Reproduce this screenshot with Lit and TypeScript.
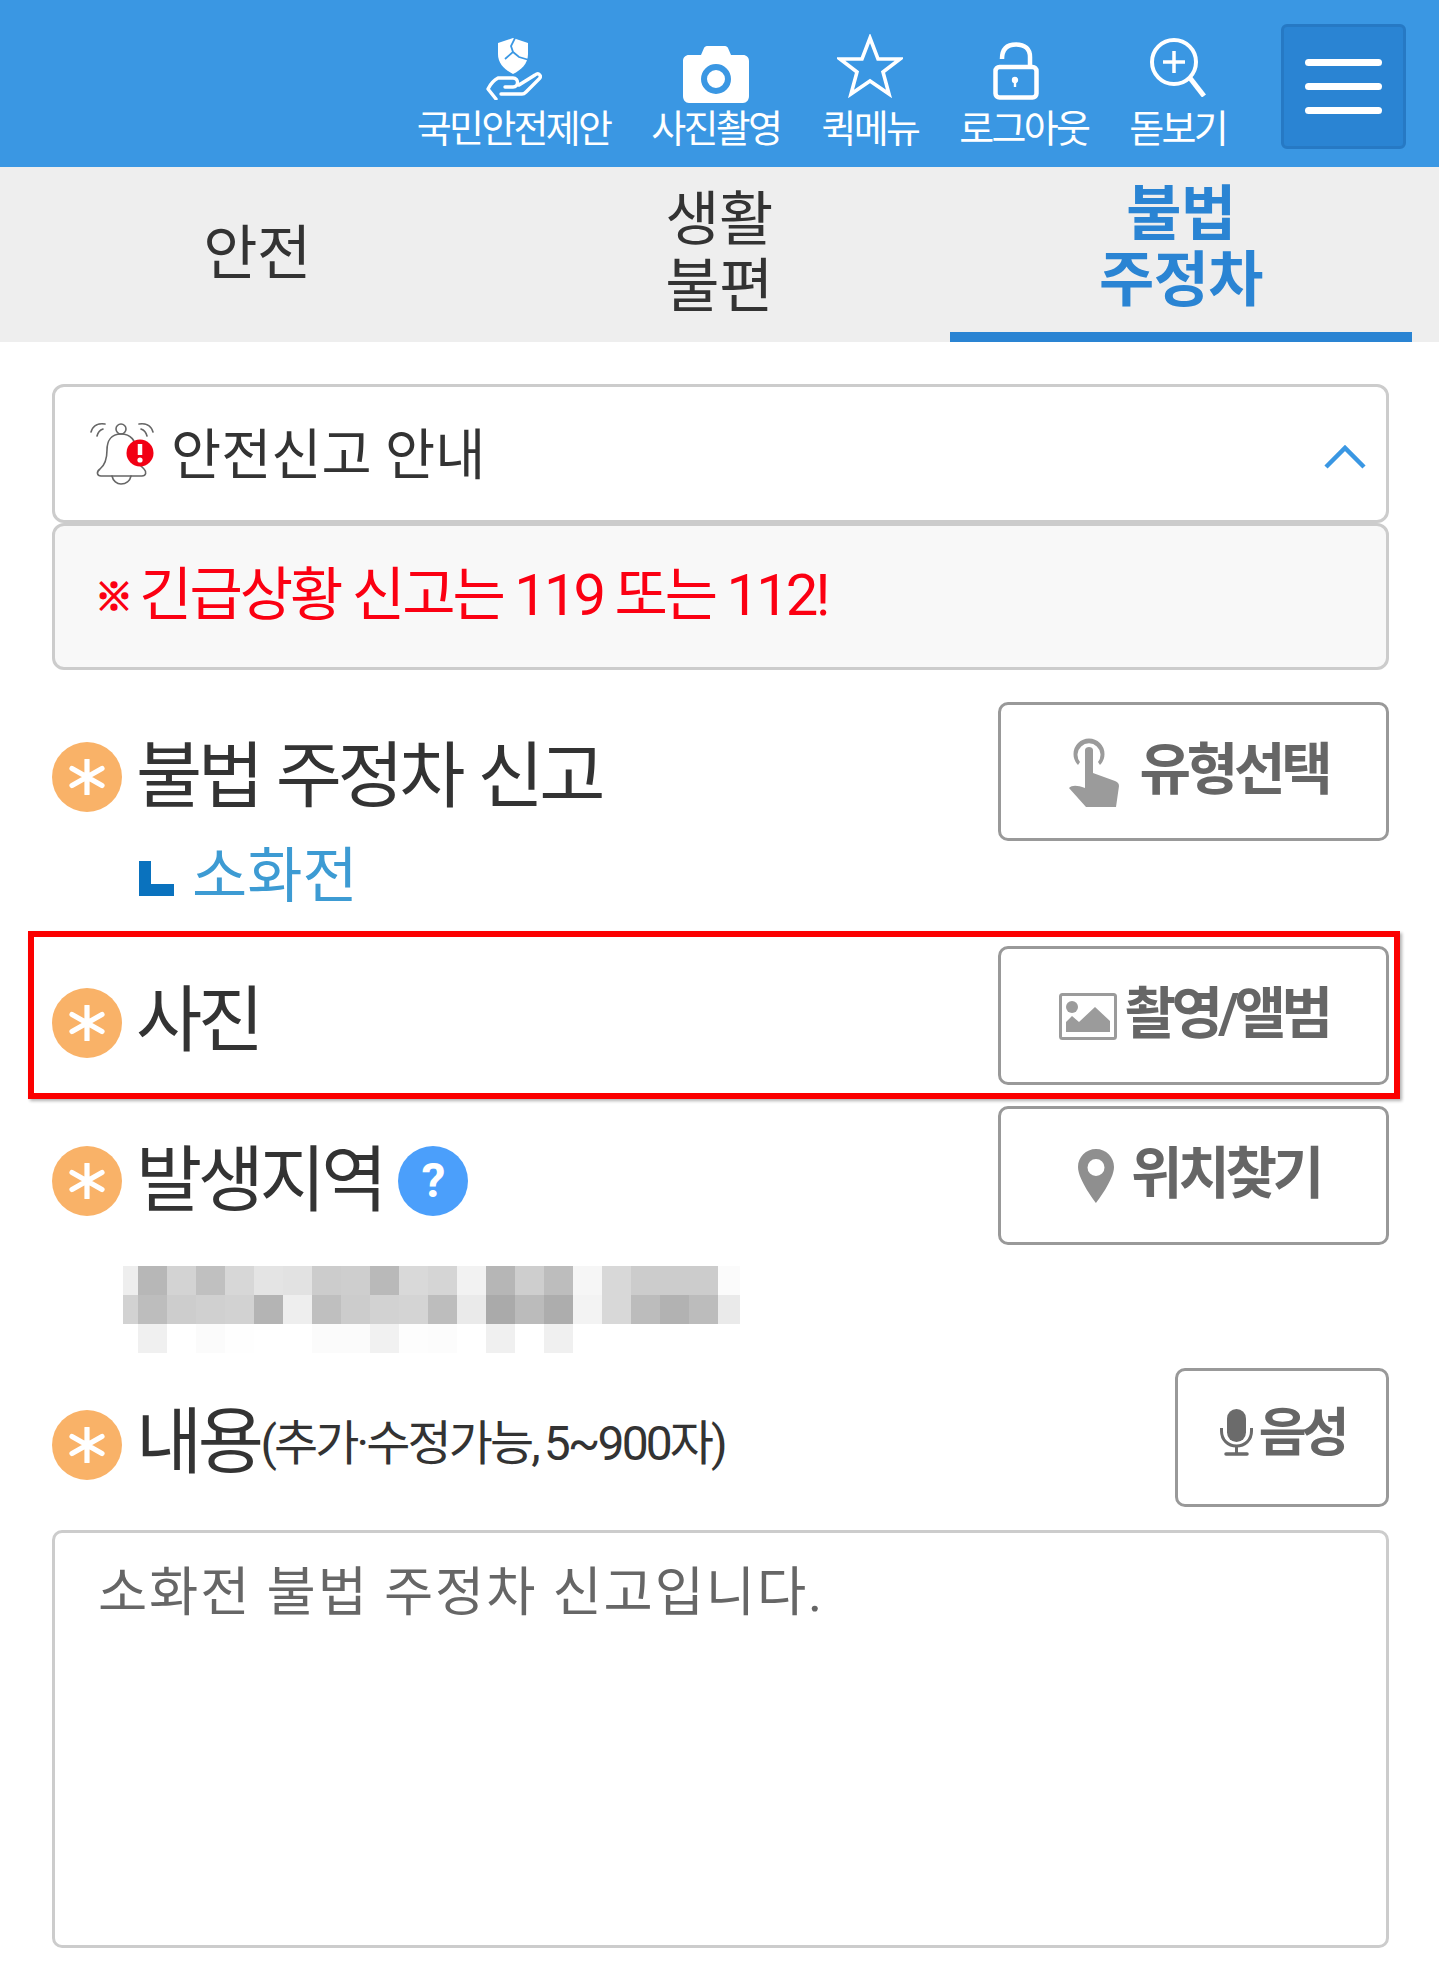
import { LitElement, css, html, svg } from 'lit'
import { customElement } from 'lit/decorators.js'

// gray levels of the blurred address, one row per line
const BLUR_ROWS = [
  ['ee', 'b7', 'd3', 'c0', 'd7', 'e4', 'e2', 'cc', 'ce', 'b9', 'd9', 'd5', 'f2', 'b6', 'ce', 'bd', 'f6', 'd8', 'cc', 'cc', 'cc', 'fb'],
  ['d2', 'bd', 'cd', 'd0', 'd2', 'b4', 'ee', 'bf', 'cc', 'd2', 'd4', 'bd', 'ea', 'aa', 'bb', 'ad', 'f3', 'd8', 'bc', 'b2', 'bc', 'ea'],
  ['ff', 'f0', 'ff', 'fb', 'fe', 'ff', 'ff', 'fb', 'fb', 'f1', 'fd', 'fc', 'ff', 'f0', 'ff', 'f0', 'ff', 'ff', 'ff', 'ff', 'ff', 'ff'],
]

const icons = {
  suggest: svg`<svg width="56" height="62" viewBox="0 0 56 62" fill="none">
    <path d="M12 5 L27 0 L42 5 V16 C42 26 35 32 27 36 C19 32 12 26 12 16 Z" fill="#fff"/>
    <path d="M29 0 L25 8 L27 14 L19 21 M27 14 L33 19 L43 22" stroke="#3a97e3" stroke-width="1.800"/>
    <path d="M10 61 L2 51 C5 45 8 42 12 40 H27 C33 40 33 49 27 49 H19 M33 47 L49 37 C53 34 56 38 53 41 L40 54 C39 55 38 56 36 56 H15" stroke="#fff" stroke-width="3.400" stroke-linejoin="round" stroke-linecap="round"/>
  </svg>`,
  camera: svg`<svg width="66" height="57" viewBox="0 0 66 57">
    <path d="M6 9 H18 L21 2 C21.500 1 22.500 0 24 0 H42 C43.500 0 44.500 1 45 2 L48 9 H60 C63.500 9 66 11.500 66 15 V50 C66 54 63.500 57 60 57 H6 C2.500 57 0 54 0 50 V15 C0 11.500 2.500 9 6 9 Z" fill="#fff"/>
    <circle cx="33" cy="33" r="12" fill="none" stroke="#3a97e3" stroke-width="6"/>
  </svg>`,
  star: svg`<svg width="66" height="64" viewBox="0 0 66 64">
    <path d="M33 4 L41 25 L63 25 L46 38 L52 60 L33 47 L14 60 L20 38 L3 25 L25 25 Z" fill="none" stroke="#fff" stroke-width="3.600" stroke-linejoin="miter"/>
  </svg>`,
  lock: svg`<svg width="46" height="58" viewBox="0 0 46 58" fill="none">
    <path d="M9 17 C9 7 14 2.500 23 2.500 C32 2.500 37 7 37 15 V24" stroke="#fff" stroke-width="4.500"/>
    <rect x="2.500" y="25" width="41" height="30.500" rx="4" stroke="#fff" stroke-width="4.500"/>
    <circle cx="22" cy="38" r="3.200" fill="#fff"/>
    <rect x="20.800" y="38" width="2.400" height="7" fill="#fff"/>
  </svg>`,
  zoom: svg`<svg width="58" height="60" viewBox="0 0 58 60" fill="none">
    <circle cx="25" cy="25" r="22" stroke="#fff" stroke-width="4"/>
    <path d="M25 14 V36 M14 25 H36" stroke="#fff" stroke-width="3.500"/>
    <path d="M41 41 L55 59" stroke="#fff" stroke-width="5"/>
  </svg>`,
  bell: svg`<svg width="64" height="64" viewBox="0 0 64 64" fill="none">
    <g stroke="#666" stroke-width="1.600" stroke-linecap="round">
      <path d="M1 10 C3 3 9 1 15 2 M7 14 C8 10 10 8 13 7 M63 10 C61 3 55 1 49 2 M57 14 C56 10 54 8 51 7"/>
      <circle cx="31" cy="7" r="5"/>
      <path d="M31 12 C21 12 17 19 17 28 C17 38 15 43 10 47 C6 50 7 54 11 54 H52 C56 54 57 50 54 47 C49 43 46 38 46 28 C46 19 41 12 31 12 Z"/>
      <path d="M22 54 C23 59 27 62 31 62 C36 62 40 59 41 54"/>
    </g>
    <circle cx="50" cy="31" r="13.500" fill="#f20014"/>
    <path d="M50 22 V33" stroke="#fff" stroke-width="4.500"/>
    <circle cx="50" cy="38" r="2.600" fill="#fff"/>
  </svg>`,
  chevron: svg`<svg width="42" height="26" viewBox="0 0 42 26" fill="none">
    <path d="M2 23 L21 4 L40 23" stroke="#3a97e3" stroke-width="4.500"/>
  </svg>`,
  touch: svg`<svg width="50" height="69" viewBox="0 0 50 69">
    <path d="M9 27 A15.500 15.500 0 1 1 31 27 L29 24 A11.500 11.500 0 1 0 11 24 Z" fill="#9b9b9b"/>
    <path d="M16 12 C16 8 24 8 24 12 V35 L46 43 C48 44 50 45 50 48 L47 69 H17 L0 50 C3 47 8 47 16 50 Z" fill="#9b9b9b"/>
  </svg>`,
  image: svg`<svg width="58" height="47" viewBox="0 0 58 47">
    <rect x="1.500" y="1.500" width="55" height="44" rx="2" fill="none" stroke="#9b9b9b" stroke-width="3"/>
    <circle cx="13" cy="14" r="6" fill="#9b9b9b"/>
    <path d="M7 39 V29 L13 23 L20 29 L36 14 L51 28 V39 Z" fill="#9b9b9b"/>
  </svg>`,
  pin: svg`<svg width="36" height="54" viewBox="0 0 36 54">
    <path fill-rule="evenodd" d="M18 0 C8 0 0 8 0 18 C0 31 18 54 18 54 C18 54 36 31 36 18 C36 8 28 0 18 0 Z M18 10 A8.500 8.500 0 1 1 18 27 A8.500 8.500 0 1 1 18 10 Z" fill="#8f8f8f"/>
  </svg>`,
  mic: svg`<svg width="33" height="47" viewBox="0 0 33 47" fill="none">
    <rect x="7" y="0" width="19" height="33" rx="9.500" fill="#6b6b6b"/>
    <path d="M1.500 19 V22 C1.500 31 8 37 16.500 37 C25 37 31.500 31 31.500 22 V19" stroke="#6b6b6b" stroke-width="3"/>
    <path d="M16.500 37 V45" stroke="#6b6b6b" stroke-width="3"/>
    <path d="M6 45 H27" stroke="#6b6b6b" stroke-width="3.500" stroke-linecap="round"/>
  </svg>`,
  asterisk: svg`<svg width="36" height="36" viewBox="0 0 36 36">
    <path d="M18 1 V35 M3 9.500 L33 26.500 M33 9.500 L3 26.500" stroke="#fff" stroke-width="5.200" stroke-linecap="round"/>
  </svg>`,
}

@customElement('app-root')
export class AppRoot extends LitElement {
  static styles = css`
    :host {
      display: block;
      height: 1964px;
      overflow: hidden;
      background: #fff;
      font-family: Roboto, 'Noto Sans CJK KR', sans-serif;
      color: #333;
    }
    .top {
      height: 167px;
      box-sizing: border-box;
      background: #3a97e3;
      display: flex;
      justify-content: flex-end;
      align-items: flex-start;
      padding: 24px 33px 0 0;
    }
    .menu {
      display: flex;
      gap: 41px;
      margin-right: 55px;
    }
    .menu-item {
      display: flex;
      flex-direction: column;
      align-items: center;
      height: 125px;
      color: #fff;
      font-size: 38px;
      letter-spacing: -2.700px;
      line-height: 40px;
      white-space: nowrap;
    }
    .menu-icon {
      height: 79px;
      display: flex;
      align-items: flex-end;
      margin-bottom: 6px;
    }
    .menu-item:nth-child(1) svg,
    .menu-item:nth-child(4) svg {
      margin-bottom: 3px;
    }
    .menu-item:nth-child(3) svg {
      margin-bottom: 5px;
    }
    .menu-item:nth-child(4) svg {
      margin-right: 16px;
    }
    .menu-item:nth-child(5) svg {
      margin-bottom: 6px;
    }
    .burger {
      width: 125px;
      height: 125px;
      box-sizing: border-box;
      background: #2a84d3;
      border: 3px solid #2679c4;
      border-radius: 6px;
      display: flex;
      flex-direction: column;
      justify-content: center;
      align-items: center;
      gap: 17px;
    }
    .burger span {
      width: 77px;
      height: 7px;
      background: #fff;
      border-radius: 4px;
    }
    .tabs {
      height: 175px;
      background: #eeeeee;
      display: grid;
      grid-template-columns: repeat(3, 462px);
      padding-left: 26px;
    }
    .tab {
      display: flex;
      align-items: center;
      justify-content: center;
      text-align: center;
      font-size: 59px;
      line-height: 67px;
      letter-spacing: -0.500px;
      padding-bottom: 3px;
    }
    .tab.active {
      color: #2a84d3;
      font-weight: 700;
      font-size: 60px;
      line-height: 66px;
      box-sizing: border-box;
      border-bottom: 10px solid #2a84d3;
      padding: 0 0 3px;
    }
    .content {
      padding: 42px 50px 0 52px;
    }
    .notice-head {
      height: 139px;
      box-sizing: border-box;
      border: 3px solid #ccc;
      border-radius: 12px;
      display: flex;
      align-items: center;
      padding: 0 20px 0 35px;
      font-size: 54.500px;
      gap: 17px;
    }
    .notice-head .grow {
      flex: 1;
      padding-bottom: 6px;
    }
    .notice-head svg:last-child {
      margin-top: 6px;
    }
    .notice-body {
      height: 147px;
      box-sizing: border-box;
      border: 3px solid #ccc;
      border-radius: 12px;
      background: #f8f8f8;
      color: #fb0012;
      display: flex;
      align-items: center;
      padding: 0 0 14px 40px;
      font-size: 58px;
      letter-spacing: -3px;
      gap: 6px;
    }
    .mark {
      font-size: 38px;
      font-weight: 700;
      letter-spacing: 0;
      margin-top: 8px;
      -webkit-text-stroke: 1.500px #fb0012;
    }
    .row {
      display: flex;
      justify-content: space-between;
      align-items: flex-start;
    }
    .row-type {
      height: 244px;
      margin-top: 32px;
    }
    .row-photo {
      height: 138px;
      position: relative;
    }
    .row-photo::after {
      content: '';
      position: absolute;
      left: -24px;
      right: -11px;
      top: -15px;
      bottom: -15px;
      border: 6px solid #fb0000;
      box-shadow: 2px 2px 3px rgba(0, 0, 0, 0.3);
    }
    .row-area {
      height: 139px;
      margin-top: 22px;
    }
    .row-text {
      height: 139px;
    }
    .label {
      display: flex;
      align-items: center;
      gap: 14px;
      height: 70px;
      margin-top: 40px;
      font-size: 72px;
      letter-spacing: -4.500px;
      word-spacing: 3px;
      line-height: 70px;
      white-space: nowrap;
    }
    .star,
    .help {
      flex: none;
      width: 70px;
      height: 70px;
      border-radius: 50%;
      background: #f9b268;
      display: flex;
      align-items: center;
      justify-content: center;
      letter-spacing: 0;
    }
    .row-photo .star,
    .row-text .star {
      margin-top: 3px;
    }
    .help {
      background: #4b9ffb;
      margin-left: 1.500px;
      color: #fff;
      font-size: 48px;
      font-weight: 700;
    }
    .sub {
      display: flex;
      align-items: center;
      gap: 18px;
      margin: 35px 0 0 87px;
      color: #3d9bd3;
      font-size: 60px;
      line-height: 60px;
    }
    .corner {
      width: 35px;
      height: 35px;
      box-sizing: border-box;
      margin-top: 3px;
      border-left: 12px solid #0a72be;
      border-bottom: 12px solid #0a72be;
    }
    .btn {
      flex: none;
      width: 391px;
      height: 139px;
      box-sizing: border-box;
      border: 3px solid #999;
      border-radius: 10px;
      background: #fff;
      color: #666;
      display: flex;
      align-items: center;
      justify-content: center;
      gap: 21px;
      font-size: 56px;
      font-weight: 700;
      letter-spacing: -4.300px;
      padding: 0 0 14px 10px;
    }
    .btn svg {
      flex: none;
      margin-top: 15px;
    }
    .btn-photo {
      gap: 8px;
      padding-left: 0;
      letter-spacing: -4.600px;
    }
    .btn-area {
      gap: 17px;
      padding-left: 11px;
    }
    .btn-voice {
      width: 214px;
      gap: 6px;
      font-size: 52px;
      letter-spacing: -5px;
      padding: 0 0 18px 0;
    }
    .btn-voice svg {
      margin-top: 8px;
    }
    .blur {
      display: grid;
      grid-template-columns: 15px repeat(20, 29px) 22px;
      grid-auto-rows: 29px;
      margin: 21px 0 15px 71px;
      width: max-content;
    }
    .text-hint {
      font-size: 48px;
      letter-spacing: -2.900px;
      word-spacing: -3px;
      margin-left: -13px;
      padding-top: 2px;
    }
    .textarea {
      height: 418px;
      box-sizing: border-box;
      margin-top: 23px;
      border: 3px solid #ccc;
      border-radius: 10px;
      padding: 25px 43px;
      color: #666;
      font-size: 53.500px;
      line-height: 70px;
      letter-spacing: 1.900px;
    }
  `

  menuItem(icon: unknown, text: string) {
    return html`<div class="menu-item"><div class="menu-icon">${icon}</div>${text}</div>`
  }

  render() {
    return html`
      <div class="top">
        <div class="menu">
          ${this.menuItem(icons.suggest, '국민안전제안')}
          ${this.menuItem(icons.camera, '사진촬영')}
          ${this.menuItem(icons.star, '퀵메뉴')}
          ${this.menuItem(icons.lock, '로그아웃')}
          ${this.menuItem(icons.zoom, '돋보기')}
        </div>
        <div class="burger"><span></span><span></span><span></span></div>
      </div>
      <div class="tabs">
        <div class="tab">안전</div>
        <div class="tab">생활<br />불편</div>
        <div class="tab active">불법<br />주정차</div>
      </div>
      <div class="content">
        <div class="notice-head">
          ${icons.bell}
          <span class="grow">안전신고 안내</span>
          ${icons.chevron}
        </div>
        <div class="notice-body"><span class="mark">※</span><span>긴급상황 신고는 119 또는 112!</span></div>

        <div class="row row-type">
          <div>
            <div class="label"><span class="star">${icons.asterisk}</span>불법 주정차 신고</div>
            <div class="sub"><span class="corner"></span>소화전</div>
          </div>
          <div class="btn">${icons.touch}유형선택</div>
        </div>

        <div class="row row-photo">
          <div class="label"><span class="star">${icons.asterisk}</span>사진</div>
          <div class="btn btn-photo">${icons.image}촬영/앨범</div>
        </div>

        <div class="row row-area">
          <div class="label"><span class="star">${icons.asterisk}</span>발생지역<span class="help">?</span></div>
          <div class="btn btn-area">${icons.pin}위치찾기</div>
        </div>
        <div class="blur">
          ${BLUR_ROWS.flat().map((c) => html`<span style="background:#${c}${c}${c}"></span>`)}
        </div>

        <div class="row row-text">
          <div class="label">
            <span class="star">${icons.asterisk}</span>
            <span>내용</span>
            <span class="text-hint">(추가·수정가능, 5~900자)</span>
          </div>
          <div class="btn btn-voice">${icons.mic}음성</div>
        </div>
        <div class="textarea">소화전 불법 주정차 신고입니다.</div>
      </div>
    `
  }
}
